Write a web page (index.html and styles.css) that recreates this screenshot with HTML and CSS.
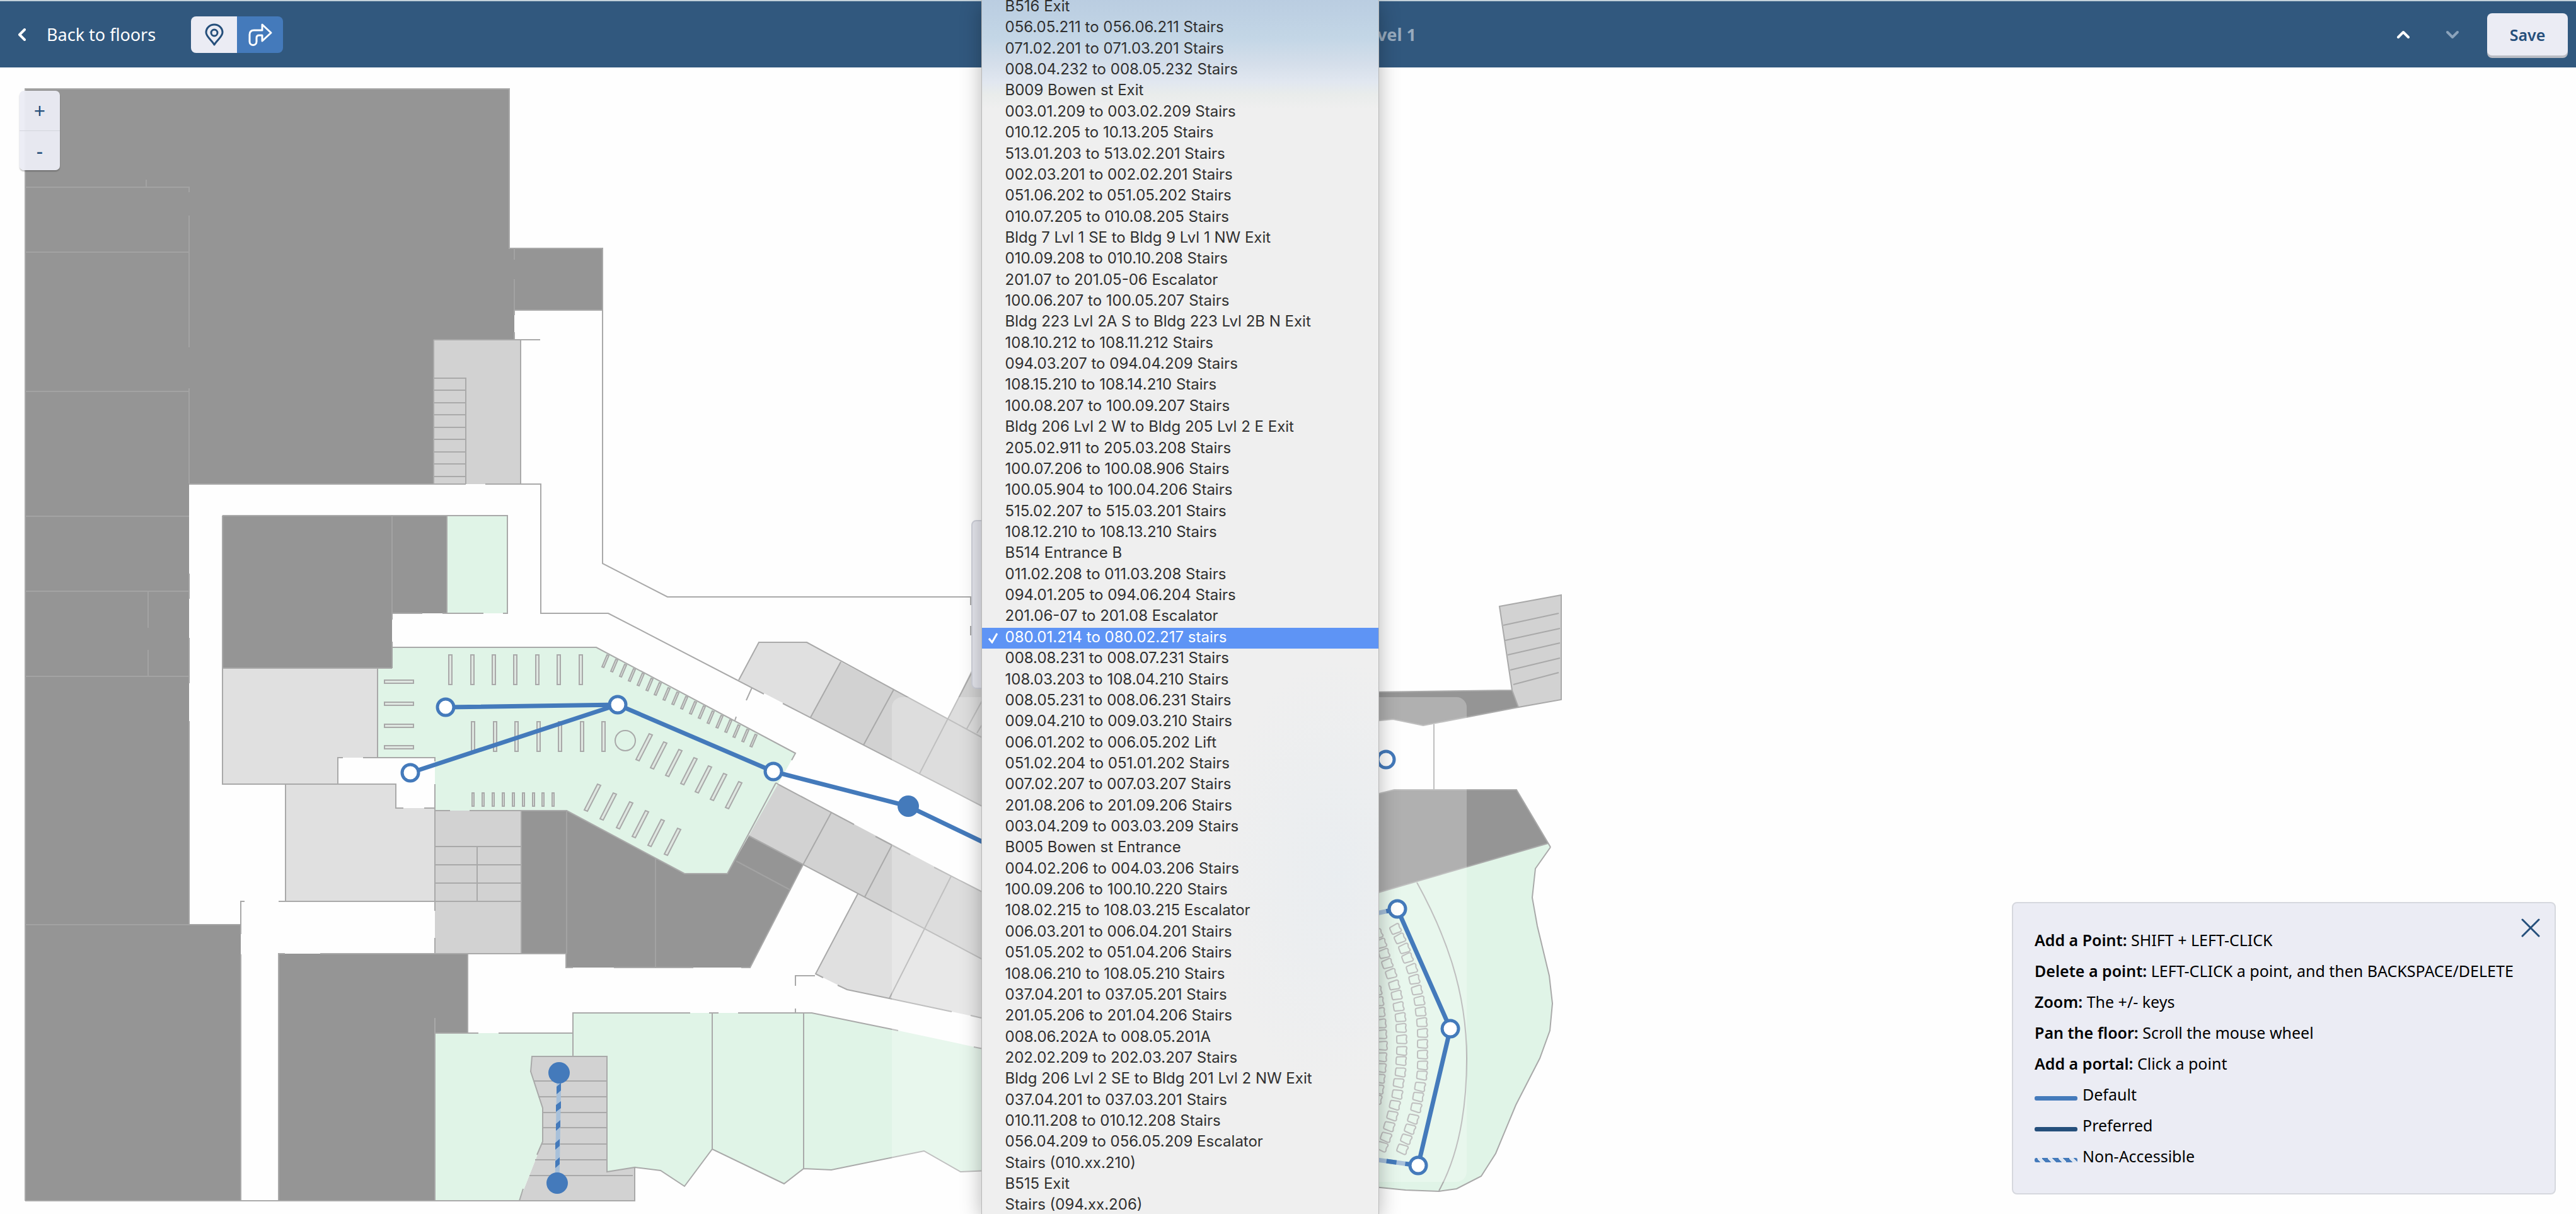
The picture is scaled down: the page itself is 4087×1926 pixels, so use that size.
FILE: index.html
```html
<!DOCTYPE html>
<html lang="en">
<head>
<meta charset="utf-8">
<meta name="viewport" content="width=device-width, initial-scale=1">
<title>Floor path editor</title>
<link rel="stylesheet" href="styles.css">
</head>
<body>
<header class="topbar">
  <div class="topbar-left">
    <a class="back" href="#floors">
      <svg width="14" height="20" viewBox="0 0 14 20" aria-hidden="true"><path d="M11 2 3 10l8 8" fill="none" stroke="currentColor" stroke-width="4" stroke-linecap="round" stroke-linejoin="round"/></svg>
      Back to floors
    </a>
    <div class="mode-toggle">
      <button type="button" class="mode" aria-label="Points">
        <svg width="32" height="36" viewBox="0 0 32 36" aria-hidden="true"><path d="M16 34C12 27 3 21 3 14.500a13 12.500 0 0 1 26 0C29 21 20 27 16 34z" fill="none" stroke="currentColor" stroke-width="3" stroke-linejoin="round"/><circle cx="16" cy="15" r="5" fill="none" stroke="currentColor" stroke-width="3"/></svg>
      </button>
      <button type="button" class="mode mode-active" aria-label="Paths">
        <svg width="40" height="38" viewBox="-2 -2 40 38" aria-hidden="true"><path d="M21 1 35 14 21 27V18H16q-4 0-4 4V28a5 5 0 0 1-11 0V17Q1 10 8 10H21Z" fill="none" stroke="currentColor" stroke-width="3" stroke-linejoin="round"/></svg>
      </button>
    </div>
  </div>
  <h1 class="title">Level 1</h1>
  <div class="topbar-right">
    <button type="button" class="step" aria-label="Floor up"><svg width="22" height="14" viewBox="0 0 22 14" aria-hidden="true"><path d="M3 11 11 3l8 8" fill="none" stroke="currentColor" stroke-width="4" stroke-linecap="round" stroke-linejoin="round"/></svg></button>
    <button type="button" class="step" disabled aria-label="Floor down"><svg width="22" height="14" viewBox="0 0 22 14" aria-hidden="true"><path d="M3 3l8 8 8-8" fill="none" stroke="currentColor" stroke-width="4" stroke-linecap="round" stroke-linejoin="round"/></svg></button>
    <button type="button" class="save">Save</button>
  </div>
</header>

<main class="canvas">
  <svg class="floor" viewBox="0 107 4087 1819" preserveAspectRatio="xMinYMin meet" role="img" aria-label="Floor plan">
    <defs>
      <marker id="seat" markerUnits="userSpaceOnUse" markerWidth="24" markerHeight="24" viewBox="-12 -12 24 24" orient="auto">
        <path d="M-7-5Q-7-8-4-8Q0-6 4-8Q7-8 7-5L6 6Q6 8 3 8H-3Q-6 8-6 6Z" fill="none" stroke="#a9a9a9" stroke-width="2"/>
      </marker>
    </defs>

    <!-- closed rooms -->
    <g class="dark">
      <path d="M40 141H808V394H956V492H816V539H688V768H300V1467H382V1905H40Z"/>
      <path d="M353 818H709V973H622V1060H353Z"/>
      <path d="M827 1286H899L1086 1386H1154L1188 1326 1274 1372 1190 1535H898V1513H827Z"/>
      <path d="M442 1513H742V1639H690V1905H442Z"/>
      <path d="M2180 1098 2399 1095 2409 1122 2258 1151 2210 1141 2180 1144Z"/>
      <path d="M2180 1261 2212 1253H2406L2456 1338 2180 1418Z"/>
    </g>
    <!-- open rooms -->
    <g class="mid">
      <path d="M688 539H826V768H688Z"/>
      <path d="M690 1286H827V1513H690Z"/>
      <path d="M844 1676H963V1859L1007 1852V1905H824L861 1811V1758L842 1700Z"/>
      <path d="M1334 1050 1504 1140 1542 1062 1580 1000V1290L1286 1138Z"/>
      <path d="M1231 1242 1570 1421V1528L1188 1326Z"/>
      <path d="M2379 962 2477 944V1110L2409 1122 2399 1095Z"/>
    </g>
    <g class="light">
      <path d="M353 1060H599V1202H536V1244H353Z"/>
      <path d="M453 1244H628V1282H690V1430H453Z"/>
      <path d="M1204 1019H1280L1334 1050 1286 1138 1172 1079Z"/>
      <path d="M1361 1418 1570 1528V1618L1510 1605 1411 1584 1344 1570 1294 1545Z"/>
    </g>
    <g class="green">
      <path d="M709 818H805V973H709Z"/>
      <path d="M622 1027H946L1262 1195 1154 1386H1086L899 1286H690V1202H599V1060H622Z"/>
      <path d="M690 1639H909V1676H844L842 1700 861 1758V1811L824 1905H690Z"/>
      <path d="M909 1607H1288L1425 1635 1570 1666V1857L1524 1859 1466 1826 1319 1856 1275 1854 1244 1878 1130 1823 1086 1882 1048 1857 1007 1852 963 1859V1676H909Z"/>
      <path d="M2180 1418 2456 1338 2460 1344 2436 1378 2431 1424 2439 1469 2458 1548 2463 1592 2459 1635 2443 1679 2405 1753 2373 1830 2350 1866 2311 1886 2283 1890 2230 1888 2180 1883Z"/>
    </g>

    <!-- walls -->
    <g class="wall">
      <path d="M40 1905V141H808V394H956V894L1059 947H1540V960M1540 993V1008M816 492H956M816 492V500M816 527V539M688 539H857M688 539V768M826 539V768M300 768H739M770 768H858V973H965L1212 1101M1242 1116 1558 1279"/>
      <path d="M688 600H739V768M688 619H739M688 639H739M688 658H739M688 678H739M688 697H739M688 717H739M688 736H739M688 756H739"/>
      <path d="M353 818H805V973H798M767 973H702M670 973H622M353 818V1244H628V1282H640M673 1282H690M709 818V973M353 1060H622M622 1027H946L1262 1195 1256 1206M599 1060V1202M536 1244V1202H544M576 1202H690V1208M690 1244V1445M453 1244V1430M442 1430H690M690 1286H714M745 1286H899L1086 1386H1154L1231 1242M690 1488V1513"/>
      <path d="M827 1286V1513M690 1343H827M690 1372H827M690 1401H827M690 1430H827M757 1343V1430M382 1467V1430H388M382 1467V1482M382 1514V1905M442 1905V1513H452M508 1513H898V1535H909M974 1535H1100M1176 1535H1190L1274 1372M690 1615V1905M690 1639H759M791 1639H909M909 1676V1607H1095M1125 1607H1140M1171 1607H1288L1425 1635M1262 1600V1607M1262 1564V1548H1293M40 1905H1007V1852L963 1859V1676H844L842 1700 861 1758V1811L852 1832M830 1886 824 1905M742 1513V1639"/>
      <path d="M847 1715H963M854 1740H963M862 1765H963M862 1789H963M859 1815H963M849 1840H963M840 1865H1004M1007 1852 1048 1857 1086 1882 1130 1823 1244 1878 1275 1854 1319 1856 1466 1826 1524 1859 1570 1857M1130 1607V1823M1275 1607V1854M1545 1661 1570 1666"/>
      <path d="M1172 1079 1204 1019H1280L1558 1170M1334 1050 1286 1138M1418 1094 1370 1182M1504 1140 1459 1227M1504 1140 1570 1012M1534 1156 1570 1090M1550 1163 1570 1130M1193 1091 1184 1111M1168 1137 1166 1143"/>
      <path d="M1236 1245 1231 1242M1236 1245 1355 1308M1389 1327 1444 1356M1482 1376 1570 1421M1188 1326 1570 1528M1319 1289 1274 1372M1415 1341 1372 1423M1509 1390 1411 1584M1361 1418 1294 1545 1306 1551M1329 1563 1344 1570 1411 1584 1510 1605M1540 1611 1570 1618"/>
      <path d="M2379 962 2477 944V1110L2409 1122 2399 1095ZM2385 992 2473 973M2388 1016 2475 997M2392 1039 2475 1020M2396 1063 2475 1044M2401 1086 2473 1067M2180 1098 2399 1095M2409 1122 2258 1151 2210 1141 2180 1144M2275 1149V1253M2180 1261 2212 1253H2406L2460 1344M2180 1418 2456 1338"/>
      <path d="M2460 1344 2436 1378 2431 1424 2439 1469 2458 1548 2463 1592 2459 1635 2443 1679 2405 1753 2373 1830 2350 1866 2311 1886 2283 1890 2230 1888 2180 1883M2248 1400C2292 1480 2327 1570 2327 1679C2327 1770 2310 1840 2283 1889"/>
    </g>
    <g class="wall-soft">
      <path d="M40 297H300V305M232 285V297M300 342V551M300 616V767M40 400H300M40 621H300M40 819H300M40 938H300M235 938V996M235 1031V1073M40 1073H300M40 1467H382M816 394V412M816 443V492M300 910V950M300 1012V1084M300 1144V1467M622 818V983M622 1018V1060M899 1286V1513M1040 1362V1535M1168 1366 1254 1412"/>
    </g>

    <!-- parking bays -->
    <g class="bay">
      <path d="M712 1039h5v47h-5zM747 1039h5v47h-5zM781 1039h5v47h-5zM815 1039h5v47h-5zM850 1039h5v47h-5zM884 1039h5v47h-5zM919 1039h5v47h-5z"/>
      <path d="M748 1145h5v47h-5zM783 1145h5v47h-5zM817 1145h5v47h-5zM852 1145h5v47h-5zM886 1145h5v47h-5zM921 1145h5v47h-5zM955 1145h5v47h-5z"/>
      <path d="M610 1079h46v5h-46zM610 1114h46v5h-46zM610 1149h46v5h-46zM610 1183h46v5h-46z"/>
      <path d="M749 1258h3v21h-3zM765 1258h3v21h-3zM781 1258h3v21h-3zM797 1258h3v21h-3zM813 1258h3v21h-3zM829 1258h3v21h-3zM845 1258h3v21h-3zM860 1258h3v21h-3zM876 1258h3v21h-3z"/>
      <circle cx="992" cy="1175" r="16"/>
      <path d="M955 1058l8-19 3 1-8 19zM969 1065l8-19 3 1-8 19zM983 1073l8-19 3 1-8 19zM997 1080l8-19 3 1-8 19zM1011 1087l8-19 3 1-8 19zM1025 1095l8-19 3 1-8 19zM1038 1102l8-19 3 1-8 19zM1052 1110l8-19 3 1-8 19zM1066 1117l8-19 3 1-8 19zM1080 1124l8-19 3 1-8 19zM1094 1132l8-19 3 1-8 19zM1108 1139l8-19 3 1-8 19zM1122 1147l8-19 3 1-8 19zM1136 1154l8-19 3 1-8 19zM1150 1161l8-19 3 1-8 19zM1163 1169l8-19 3 1-8 19zM1177 1176l8-19 3 1-8 19zM1190 1184l8-19 3 1-8 19z"/>
      <path d="M1009 1205l21-41 5 2-21 41zM1032 1218l21-41 5 2-21 41zM1056 1230l21-41 5 2-21 41zM1080 1243l21-41 5 2-21 41zM1103 1256l21-41 5 2-21 41zM1127 1268l21-41 5 2-21 41zM1151 1281l21-41 5 2-21 41z"/>
      <path d="M927 1285l21-41 5 2-21 41zM952 1299l21-41 5 2-21 41zM978 1313l21-41 5 2-21 41zM1003 1327l21-41 5 2-21 41zM1028 1341l21-41 5 2-21 41zM1054 1355l21-41 5 2-21 41z"/>
    </g>

    <!-- lecture theatre seats -->
    <g fill="none" marker-start="url(#seat)" marker-mid="url(#seat)" marker-end="url(#seat)">
      <polyline points="2214,1474 2221,1489 2228,1505 2233,1520 2240,1537 2244,1554 2248,1571 2252,1588 2254,1605 2256,1622 2257,1639 2257,1656 2257,1673 2257,1690 2256,1706 2253,1724 2250,1740 2247,1757 2242,1775 2237,1791 2231,1807 2225,1823"/>
      <polyline points="2185,1482 2191,1497 2196,1513 2201,1529 2207,1545 2212,1563 2216,1579 2219,1597 2222,1614 2223,1631 2224,1649 2224,1667 2223,1683 2222,1701 2219,1718 2217,1736 2213,1753 2209,1770 2204,1787 2199,1804 2193,1819"/>
      <polyline points="2184,1572 2187,1589 2189,1606 2191,1624 2192,1641 2193,1659 2192,1677 2191,1694 2189,1711 2187,1728 2184,1744"/>
    </g>

    <rect x="1415" y="1106" width="912" height="769" rx="16" fill="#fff" fill-opacity=".26"/>

    <!-- routes -->
    <g class="route">
      <path d="M651 1226 980 1118M707 1122 980 1118 1227 1224 1441 1279 1570 1341M2217 1442 2301 1632 2250 1849"/>
      <path class="route-faint" d="M887 1702 884 1877M2170 1452 2217 1442M2170 1838 2250 1849"/>
      <path class="route-dash" d="M2170 1452 2217 1442M2170 1838 2250 1849"/>
    </g>
    <g class="portal">
      <path d="M890 1718v12l-7 6v-12zM890 1747v11l-8 6v-11zM889 1777v11l-7 6v-11zM888 1807v11l-7 6v-11zM888 1836v11l-7 6v-11z"/>
      <circle cx="1441" cy="1279" r="17"/><circle cx="887" cy="1702" r="17"/><circle cx="884" cy="1877" r="17"/>
    </g>
    <g class="node">
      <circle cx="707" cy="1122" r="13"/><circle cx="980" cy="1118" r="13"/><circle cx="651" cy="1226" r="13"/><circle cx="1227" cy="1224" r="13"/>
      <circle cx="2199" cy="1205" r="13"/><circle cx="2217" cy="1442" r="13"/><circle cx="2301" cy="1632" r="13"/><circle cx="2250" cy="1849" r="13"/>
    </g>
  </svg>

  <div class="zoom">
    <button type="button" class="zoom-btn" aria-label="Zoom in">+</button>
    <button type="button" class="zoom-btn" aria-label="Zoom out">-</button>
  </div>

  <aside class="help">
    <button type="button" class="help-close" aria-label="Close"><svg width="30" height="30" viewBox="0 0 30 30" aria-hidden="true"><path d="M2 2 28 28M28 2 2 28" stroke="currentColor" stroke-width="3" stroke-linecap="round"/></svg></button>
    <ul class="help-list">
      <li><strong>Add a Point:</strong> SHIFT + LEFT-CLICK</li>
      <li><strong>Delete a point:</strong> LEFT-CLICK a point, and then BACKSPACE/DELETE</li>
      <li><strong>Zoom:</strong> The +/- keys</li>
      <li><strong>Pan the floor:</strong> Scroll the mouse wheel</li>
      <li><strong>Add a portal:</strong> Click a point</li>
      <li><span class="swatch"></span>Default</li>
      <li><span class="swatch swatch-preferred"></span>Preferred</li>
      <li><span class="swatch swatch-stairs"></span>Non-Accessible</li>
    </ul>
  </aside>
</main>

<div class="dialog"></div>
<div class="menu">
<select class="portals" size="58" aria-label="Portal">
<option>B516 Exit</option>
<option>056.05.211 to 056.06.211 Stairs</option>
<option>071.02.201 to 071.03.201 Stairs</option>
<option>008.04.232 to 008.05.232 Stairs</option>
<option>B009 Bowen st Exit</option>
<option>003.01.209 to 003.02.209 Stairs</option>
<option>010.12.205 to 10.13.205 Stairs</option>
<option>513.01.203 to 513.02.201 Stairs</option>
<option>002.03.201 to 002.02.201 Stairs</option>
<option>051.06.202 to 051.05.202 Stairs</option>
<option>010.07.205 to 010.08.205 Stairs</option>
<option>Bldg 7 Lvl 1 SE to Bldg 9 Lvl 1 NW Exit</option>
<option>010.09.208 to 010.10.208 Stairs</option>
<option>201.07 to 201.05-06 Escalator</option>
<option>100.06.207 to 100.05.207 Stairs</option>
<option>Bldg 223 Lvl 2A S to Bldg 223 Lvl 2B N Exit</option>
<option>108.10.212 to 108.11.212 Stairs</option>
<option>094.03.207 to 094.04.209 Stairs</option>
<option>108.15.210 to 108.14.210 Stairs</option>
<option>100.08.207 to 100.09.207 Stairs</option>
<option>Bldg 206 Lvl 2 W to Bldg 205 Lvl 2 E Exit</option>
<option>205.02.911 to 205.03.208 Stairs</option>
<option>100.07.206 to 100.08.906 Stairs</option>
<option>100.05.904 to 100.04.206 Stairs</option>
<option>515.02.207 to 515.03.201 Stairs</option>
<option>108.12.210 to 108.13.210 Stairs</option>
<option>B514 Entrance B</option>
<option>011.02.208 to 011.03.208 Stairs</option>
<option>094.01.205 to 094.06.204 Stairs</option>
<option>201.06-07 to 201.08 Escalator</option>
<option selected>080.01.214 to 080.02.217 stairs</option>
<option>008.08.231 to 008.07.231 Stairs</option>
<option>108.03.203 to 108.04.210 Stairs</option>
<option>008.05.231 to 008.06.231 Stairs</option>
<option>009.04.210 to 009.03.210 Stairs</option>
<option>006.01.202 to 006.05.202 Lift</option>
<option>051.02.204 to 051.01.202 Stairs</option>
<option>007.02.207 to 007.03.207 Stairs</option>
<option>201.08.206 to 201.09.206 Stairs</option>
<option>003.04.209 to 003.03.209 Stairs</option>
<option>B005 Bowen st Entrance</option>
<option>004.02.206 to 004.03.206 Stairs</option>
<option>100.09.206 to 100.10.220 Stairs</option>
<option>108.02.215 to 108.03.215 Escalator</option>
<option>006.03.201 to 006.04.201 Stairs</option>
<option>051.05.202 to 051.04.206 Stairs</option>
<option>108.06.210 to 108.05.210 Stairs</option>
<option>037.04.201 to 037.05.201 Stairs</option>
<option>201.05.206 to 201.04.206 Stairs</option>
<option>008.06.202A to 008.05.201A</option>
<option>202.02.209 to 202.03.207 Stairs</option>
<option>Bldg 206 Lvl 2 SE to Bldg 201 Lvl 2 NW Exit</option>
<option>037.04.201 to 037.03.201 Stairs</option>
<option>010.11.208 to 010.12.208 Stairs</option>
<option>056.04.209 to 056.05.209 Escalator</option>
<option>Stairs (010.xx.210)</option>
<option>B515 Exit</option>
<option>Stairs (094.xx.206)</option>
</select>
</div>
</body>
</html>
```
FILE: styles.css
```css
* { box-sizing: border-box; }

body {
  margin: 0;
  height: 100vh;
  display: flex;
  flex-direction: column;
  position: relative;
  overflow: hidden;
  background: #fefefe;
  color: #000;
  font-family: "Noto Sans", sans-serif;
  font-size: 25px;
}

button {
  border: 0;
  padding: 0;
  font: inherit;
  background: none;
  color: inherit;
}

svg { display: block; }

/* Header */
.topbar {
  display: grid;
  grid-template-columns: 1fr auto 1fr;
  align-items: center;
  padding: 0 13px 0 28px;
  height: 107px;
  border-top: 2px solid #c3d1da;
  background: #31587e;
  color: #fff;
}

.topbar-left,
.topbar-right { display: flex; align-items: center; }

.topbar-right { justify-content: flex-end; }

.back {
  display: flex;
  align-items: center;
  gap: 32px;
  color: inherit;
  font-size: 27px;
  text-decoration: none;
}

.mode-toggle { display: flex; margin-left: 56px; }

.mode {
  display: grid;
  place-items: center;
  width: 73px;
  height: 58px;
  border-radius: 8px 0 0 8px;
  background: #ebecf4;
  color: #254f7b;
}

.mode-active {
  border-radius: 0 8px 8px 0;
  background: #447abb;
  color: #fff;
}

.title {
  margin: 0;
  width: 392px;
  text-align: right;
  font-size: 27px;
  font-weight: 700;
  color: #98abbe;
}

.step {
  display: grid;
  place-items: center;
  width: 78px;
  height: 60px;
}

.step:disabled { color: #8ba3bb; }

.save {
  width: 128px;
  height: 67px;
  margin-left: 16px;
  border-radius: 8px;
  background: #ebecf4;
  box-shadow: 0 4px 0 #b9bcc4;
  color: #254f7b;
  font-weight: 600;
}

/* Floor plan */
.canvas { flex: 1; position: relative; }

.floor { width: 100%; }

.dark { fill: #959595; }
.mid { fill: #d2d2d2; }
.light { fill: #e0e0e0; }
.green { fill: #e0f4e7; }
.wall, .bay { fill: none; stroke: #a9a9a9; stroke-width: 2; }
.wall-soft { fill: none; stroke: #a3a3a3; stroke-width: 2; }
.bay { fill: #dfe7e1; }
.bay circle { fill: none; }

.route { fill: none; stroke: #447abb; stroke-width: 7; }
.route-faint { stroke: #a7c0da; }
.route-dash { stroke-dasharray: 16 14; }
.node { fill: #fff; stroke: #447abb; stroke-width: 5; }
.portal { fill: #447abb; }

.zoom {
  position: absolute;
  top: 37px;
  left: 31px;
  width: 64px;
  border-radius: 7px;
  background: rgba(235, 236, 244, .95);
  box-shadow: 0 2px 2px rgba(0, 0, 0, .25);
  color: #254f7b;
}

.zoom-btn {
  display: block;
  width: 100%;
  height: 63px;
  font-size: 32px;
}

.zoom-btn + .zoom-btn { border-top: 1px solid #d3d5dc; }

/* Help panel */
.help {
  position: absolute;
  right: 32px;
  bottom: 31px;
  padding: 34px;
  width: 863px;
  border: 2px solid #d6d8de;
  border-radius: 8px;
  background: #ebecf4;
}

.help-close {
  position: absolute;
  top: 24px;
  right: 23px;
  color: #254f7b;
}

.help-list {
  margin: 0;
  padding: 0;
  list-style: none;
  line-height: 49px;
}

.help-list strong { font-weight: 600; }

.swatch {
  display: inline-block;
  width: 68px;
  height: 7px;
  margin-right: 8px;
  border-radius: 3px;
  background: #447abb;
}

.swatch-preferred { background: #254f7b; }

.swatch-stairs {
  background: repeating-linear-gradient(50deg, #447abb 0 7px, #dde5f0 7px 13px);
}

/* Open portal list over its dialog */
.dialog {
  position: absolute;
  top: 825px;
  left: calc(50% - 503px);
  width: 620px;
  height: 268px;
  border: 2px solid #cfd1da;
  border-radius: 8px;
  background: #e6e7ee;
}

.menu {
  position: absolute;
  inset: 0 auto 0 calc(50% - 486px);
  width: 629px;
  overflow: hidden;
  background:
    radial-gradient(ellipse 200px 340px at 90% 72%, rgba(230, 236, 241, .6), rgba(230, 236, 241, 0)),
    linear-gradient(#bacde1 0, #c3d6e6 60px, #d4deea 100px, #e1e7f0 130px, #e9eceb 150px, #efefef 172px);
  box-shadow: 0 0 0 1px #b8b8b8, 0 8px 32px rgba(0, 0, 0, .3);
}

.portals {
  display: block;
  width: 100%;
  height: calc(100vh + 9px);
  margin: -5px 0 0;
  padding: 0;
  border: 0;
  outline: 0;
  overflow: hidden;
  background: none;
  color: #303030;
  font-family: Inter, "Liberation Sans", sans-serif;
  font-size: 24px;
}

.portals option {
  height: calc((100vh + 9px) / 58);
  min-height: 0;
  padding: 0 0 0 37px;
  line-height: 33px;
}

.portals option:checked {
  background-image:
    url("data:image/svg+xml,%3Csvg xmlns='http://www.w3.org/2000/svg' width='18' height='18'%3E%3Cpath d='M2 10l5 6L15 2' fill='none' stroke='white' stroke-width='3'/%3E%3C/svg%3E"),
    linear-gradient(#5e94f5, #5e94f5);
  background-repeat: no-repeat;
  background-position: 9px center, 0 0;
  -webkit-text-fill-color: #fff;
}
```
